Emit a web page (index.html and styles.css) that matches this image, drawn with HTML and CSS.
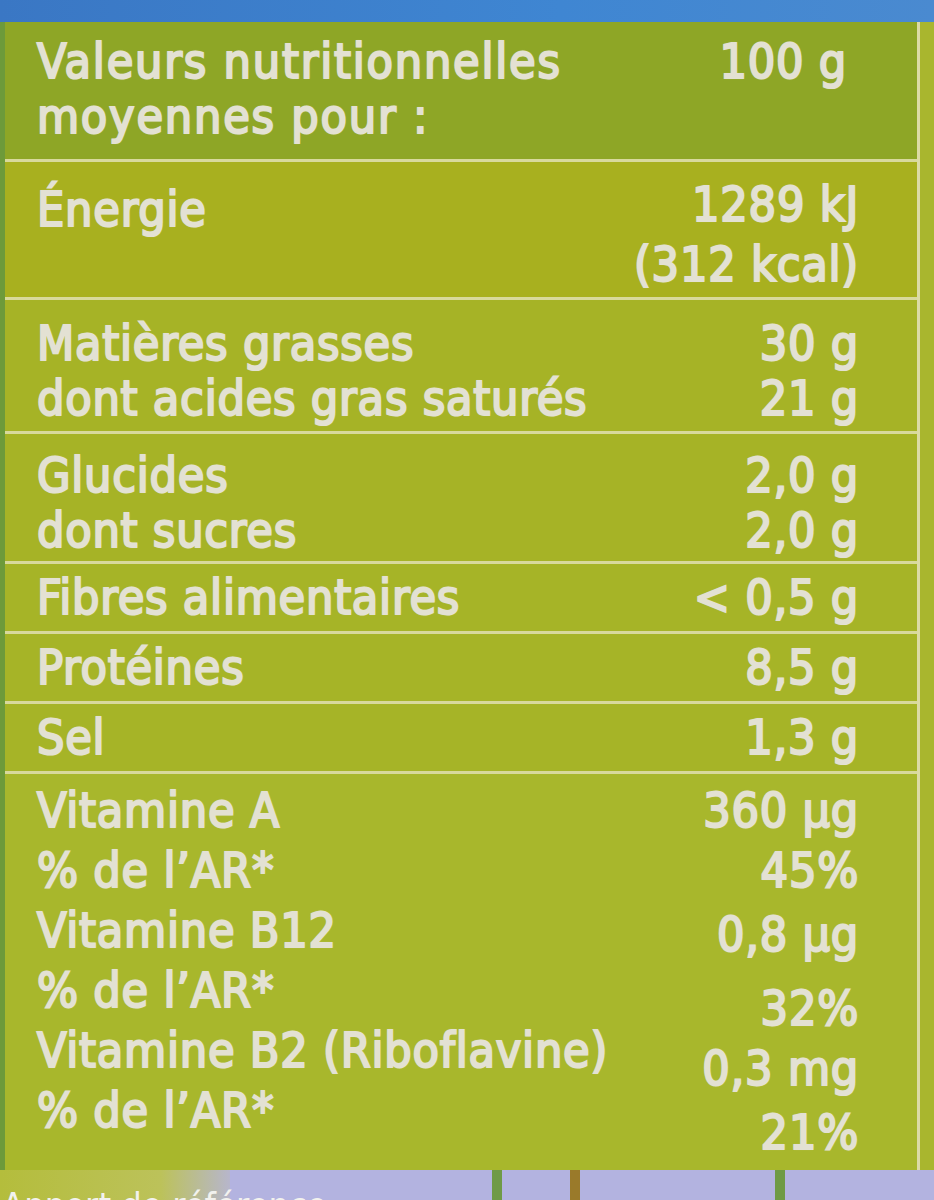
FILE: index.html
```html
<!DOCTYPE html>
<html lang="fr">
<head>
<meta charset="utf-8">
<title>Valeurs nutritionnelles</title>
<link rel="stylesheet" href="styles.css">
</head>
<body>
<div class="page">
  <div class="topband"></div>
  <div class="label">
    <div class="table">
      <div class="row head">
        <div class="name">Valeurs nutritionnelles<br>moyennes pour :</div>
        <div class="val head-val">100 g</div>
      </div>
      <div class="row energy">
        <div class="name">Énergie</div>
        <div class="val">1289 kJ<br>(312 kcal)</div>
      </div>
      <div class="row two">
        <div class="name">Matières grasses<br>dont acides gras saturés</div>
        <div class="val">30 g<br>21 g</div>
      </div>
      <div class="row two">
        <div class="name">Glucides<br>dont sucres</div>
        <div class="val">2,0 g<br>2,0 g</div>
      </div>
      <div class="row one">
        <div class="name">Fibres alimentaires</div>
        <div class="val">&lt; 0,5 g</div>
      </div>
      <div class="row one">
        <div class="name">Protéines</div>
        <div class="val">8,5 g</div>
      </div>
      <div class="row one">
        <div class="name">Sel</div>
        <div class="val">1,3 g</div>
      </div>
      <div class="row vit">
        <div class="name vit-names">
          <div>Vitamine A</div>
          <div>% de l’AR*</div>
          <div>Vitamine B12</div>
          <div>% de l’AR*</div>
          <div>Vitamine B2 (Riboflavine)</div>
          <div>% de l’AR*</div>
        </div>
        <div class="val vit-vals">
          <div class="v1">360 µg</div>
          <div class="v2">45%</div>
          <div class="v3">0,8 µg</div>
          <div class="v4">32%</div>
          <div class="v5">0,3 mg</div>
          <div class="v6">21%</div>
        </div>
      </div>
    </div>
    <div class="edge"></div>
  </div>
  <div class="bottom">
    <div class="bottom-left"></div>
    <div class="bottom-right">
      <span class="stem s1"></span>
      <span class="stem s2"></span>
      <span class="stem s3"></span>
    </div>
    <div class="bottom-text">Apport de référence</div>
  </div>
</div>
</body>
</html>
```
FILE: styles.css
```css
html, body {
  margin: 0;
  padding: 0;
  background: #a9b62a;
}
.page {
  width: 934px;
  height: 1200px;
  overflow: hidden;
  position: relative;
  font-family: "DejaVu Sans Condensed", "DejaVu Sans", "Liberation Sans", sans-serif;
  font-stretch: condensed;
  font-weight: normal;
  color: #e3e1d3;
}
.topband {
  height: 22px;
  background: linear-gradient(90deg, #3a77c4, #3f86d2 60%, #4a8ad0);
}
.label {
  display: flex;
  background: #a8b528;
  border-left: 5px solid #6d9a3a;
}
.table {
  width: 912px;
  border-right: 3px solid #dcdba6;
}
.edge {
  flex: 1;
  background: #a9b62e;
}
.row {
  display: flex;
  justify-content: space-between;
  border-bottom: 3px solid #d8d99c;
  font-size: 48px;
  line-height: 55px;
  letter-spacing: 0.8px;
  padding: 0 58px 0 32px;
  -webkit-text-stroke: 2px #e3e1d3;
  text-shadow: 0 0 2px rgba(230, 228, 215, 0.7);
}
.val {
  text-align: right;
}
.head {
  background: #8ea626;
  height: 140px;
  padding-top: 12px;
  box-sizing: border-box;
  padding-right: 70px;
}
.head .name {
  letter-spacing: 1.8px;
}
.energy {
  background: #a8b01f;
  height: 138px;
  padding-top: 12px;
  box-sizing: border-box;
}
.energy .name {
  padding-top: 8px;
}
.energy .val {
  line-height: 60px;
}
.two {
  background: #a6b326;
  height: 134px;
  padding-top: 16px;
  box-sizing: border-box;
}
.two + .two {
  height: 130px;
  padding-top: 14px;
}
.one {
  background: #a6b427;
  height: 70px;
  padding-top: 6px;
  box-sizing: border-box;
}
.vit {
  background: #a8b72c;
  height: 396px;
  padding-top: 6px;
  box-sizing: border-box;
  border-bottom: none;
  line-height: 60px;
}
.vit-vals .v3 { margin-top: 4px; }
.vit-vals .v4 { margin-top: 14px; }
.vit-vals .v5 { margin-top: 0px; }
.vit-vals .v6 { margin-top: 4px; }
.bottom {
  position: relative;
  display: flex;
  height: 40px;
}
.bottom-left {
  width: 230px;
  background: linear-gradient(90deg, #b4bd3c, #bcc25a 70%, #b7b6cc);
}
.bottom-right {
  flex: 1;
  position: relative;
  background: #b3b3e0;
}
.stem {
  position: absolute;
  top: 0;
  width: 10px;
  height: 40px;
  background: #6f9a46;
}
.s1 { left: 262px; }
.s2 { left: 340px; background: #9a7a2a; }
.s3 { left: 545px; }
.bottom-text {
  position: absolute;
  left: 2px;
  top: 18px;
  font-size: 36px;
  line-height: 36px;
  color: #f2f2ee;
}
```
